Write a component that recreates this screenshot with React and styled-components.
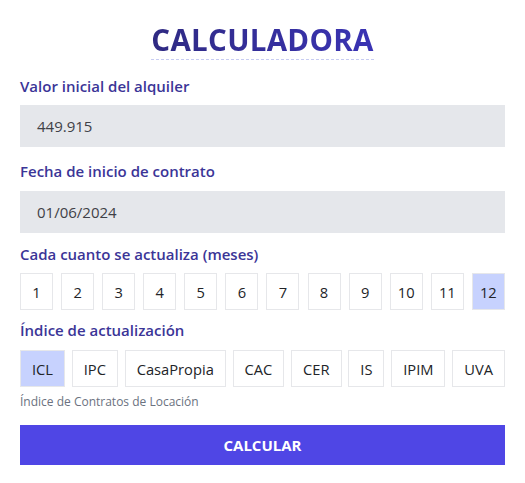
import React, { useState } from "react";
import styled, { createGlobalStyle } from "styled-components";

const Global = createGlobalStyle`
  html, body { margin: 0; padding: 0; background: #ffffff; }
  body { font-family: "Open Sans", "Noto Sans", sans-serif; }
  * { box-sizing: border-box; }
`;

const Page = styled.div`
  width: 525px;
  padding: 21px 20px 0 20px;
  display: flex;
  flex-direction: column;
`;

const TitleWrap = styled.div`
  display: flex;
  justify-content: center;
  margin-bottom: 14px;
`;

const Title = styled.h1`
  margin: 0;
  font-size: 29.5px;
  line-height: 38px;
  font-weight: 700;
  letter-spacing: 0.3px;
  background: linear-gradient(90deg, #2f2a82 0%, #3a33b4 100%);
  -webkit-background-clip: text;
  background-clip: text;
  color: transparent;
  border-bottom: 1px dashed #c7ccf2;
`;

const Label = styled.div`
  font-size: 15px;
  line-height: 24px;
  font-weight: 600;
  color: #3b3597;
  margin-bottom: ${(p) => p.$mb || 8}px;
`;

const Field = styled.div`
  height: 42px;
  background: #e5e7eb;
  display: flex;
  align-items: center;
  padding-left: 17px;
  font-size: 15px;
  color: #3f4147;
  margin-bottom: ${(p) => p.$mb || 12}px;
`;

const Row = styled.div`
  display: flex;
  justify-content: space-between;
  margin-bottom: ${(p) => p.$mb || 8}px;
`;

const Option = styled.button`
  height: 37px;
  width: ${(p) => (p.$fixed ? "33px" : "auto")};
  padding: ${(p) => (p.$fixed ? "0" : "0 11px")};
  border: 1px solid #e6e7ea;
  background: ${(p) => (p.$active ? "#c7d2fe" : "#ffffff")};
  font-family: inherit;
  font-size: 14.7px;
  color: #222428;
  display: flex;
  align-items: center;
  justify-content: center;
  cursor: pointer;
`;

const Caption = styled.div`
  font-size: 12px;
  line-height: 16px;
  color: #6b7280;
  margin-top: 1px;
  margin-bottom: 15px;
`;

const Submit = styled.button`
  height: 40px;
  width: 100%;
  border: none;
  background: #4f46e5;
  color: #ffffff;
  font-family: inherit;
  font-weight: 700;
  font-size: 15px;
  cursor: pointer;
`;

const months = [1, 2, 3, 4, 5, 6, 7, 8, 9, 10, 11, 12];
const indices = ["ICL", "IPC", "CasaPropia", "CAC", "CER", "IS", "IPIM", "UVA"];

export default function App() {
  const [month, setMonth] = useState(12);
  const [idx, setIdx] = useState("ICL");
  return (
    <Page>
      <Global />
      <TitleWrap>
        <Title>CALCULADORA</Title>
      </TitleWrap>
      <Label $mb={7}>Valor inicial del alquiler</Label>
      <Field>449.915</Field>
      <Label>Fecha de inicio de contrato</Label>
      <Field $mb={9}>01/06/2024</Field>
      <Label $mb={7}>Cada cuanto se actualiza (meses)</Label>
      <Row>
        {months.map((m) => (
          <Option key={m} $fixed $active={m === month} onClick={() => setMonth(m)}>
            {m}
          </Option>
        ))}
      </Row>
      <Label>Índice de actualización</Label>
      <Row $mb={6}>
        {indices.map((i) => (
          <Option key={i} $active={i === idx} onClick={() => setIdx(i)}>
            {i}
          </Option>
        ))}
      </Row>
      <Caption>Índice de Contratos de Locación</Caption>
      <Submit>CALCULAR</Submit>
    </Page>
  );
}
